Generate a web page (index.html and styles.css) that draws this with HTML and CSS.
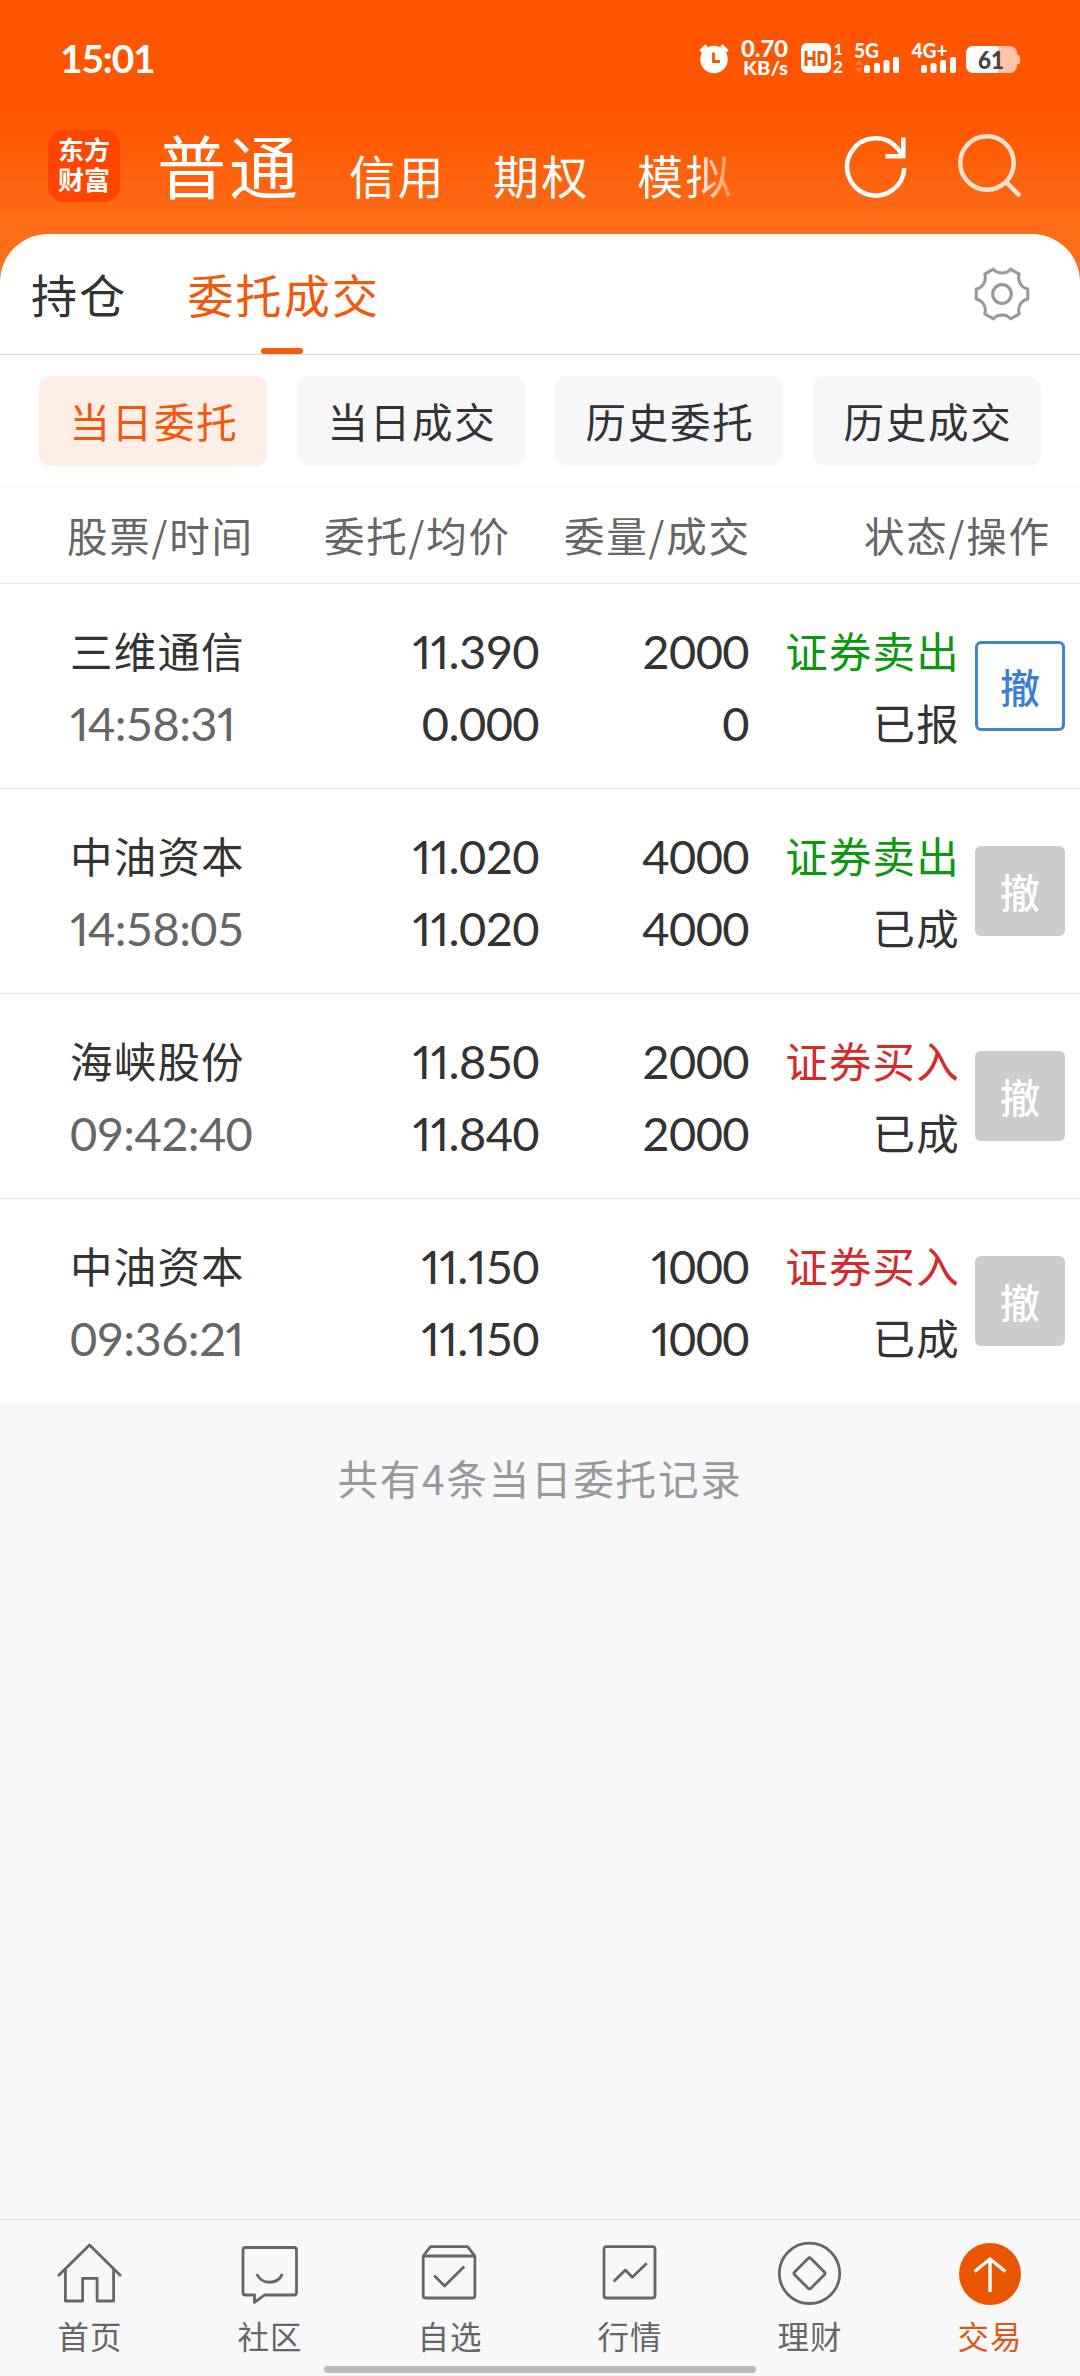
FILE: index.html
```html
<!DOCTYPE html>
<html lang="zh-CN">
<head>
<meta charset="utf-8">
<title>委托成交</title>
<link rel="stylesheet" href="styles.css">
</head>
<body>
<div class="app">
  <header class="top">
    <div class="status">
      <span class="clock">15:01</span>
      <svg class="status-icons" width="324" height="60" viewBox="698 28 324 60" fill="#fff">
        <circle cx="714" cy="59.5" r="13.7"/>
        <path d="M700.500 51.500l6-6M727.500 51.500l-6-6" stroke="#fff" stroke-width="3.500"/>
        <path d="M713.500 52.500v9h6.500" fill="none" stroke="#ff5500" stroke-width="2.800"/>
        <text x="741" y="57" font-size="22" textLength="47" lengthAdjust="spacingAndGlyphs">0.70</text>
        <text x="743" y="75" font-size="19.500" textLength="45" lengthAdjust="spacingAndGlyphs">KB/s</text>
        <rect x="801" y="43" width="30" height="30" rx="6"/>
        <path d="M806 51v15M814 51v15M806 58.500h8M819 52.500v12h4q3 0 3-3v-6q0-3-3-3z" fill="none" stroke="#e8590f" stroke-width="3"/>
        <text x="834" y="54.500" font-size="15">1</text>
        <text x="833" y="72.500" font-size="17">2</text>
        <text x="854" y="57.500" font-size="20" textLength="25" lengthAdjust="spacingAndGlyphs">5G</text>
        <path d="M855 65l4-5 4 5zM855 68l4 5 4-5z" fill="#ff7a38"/>
        <rect x="864" y="65" width="6" height="8" rx="2"/><rect x="874" y="63" width="6" height="10" rx="2"/><rect x="883.500" y="60" width="6" height="13" rx="2"/><rect x="893" y="57" width="6" height="16" rx="2"/>
        <text x="911.500" y="57.500" font-size="20" textLength="36" lengthAdjust="spacingAndGlyphs">4G+</text>
        <rect x="921" y="65" width="6" height="8" rx="2"/><rect x="930.500" y="63" width="6" height="10" rx="2"/><rect x="940" y="60" width="6" height="13" rx="2"/><rect x="950" y="57" width="6" height="16" rx="2"/>
        <path d="M998 46h12a7 7 0 0 1 7 7v1.500q3 0 3 3v4q0 3-3 3v1.500a7 7 0 0 1-7 7h-12z" fill="#ffc4a8"/>
        <path d="M973 46h25v27h-25a7 7 0 0 1-7-7v-13a7 7 0 0 1 7-7z"/>
        <text x="978" y="69" font-size="25" textLength="26" lengthAdjust="spacingAndGlyphs" fill="#444">61</text>
      </svg>
    </div>
    <div class="titlebar">
      <div class="logo"><span>东方</span><span>财富</span></div>
      <nav class="markets">
        <span class="market current">普通</span>
        <span class="market">信用</span>
        <span class="market">期权</span>
        <span class="market fading">模拟</span>
      </nav>
      <svg class="refresh" width="66" height="66" viewBox="843 134 66 66" fill="none" stroke="#fff" stroke-width="4.500">
        <path d="M904.300 168A28.600 28.600 0 1 1 898 149L903 156"/>
        <path d="M903.300 137.500V156.300H885.500"/>
      </svg>
      <svg class="search" width="66" height="66" viewBox="957 132 66 66" fill="none" stroke="#ffe2d0" stroke-width="4.500">
        <circle cx="987" cy="163" r="26.700"/>
        <path d="M1005.500 181.500L1020 196"/>
      </svg>
    </div>
  </header>

  <main class="card">
    <div class="tabs">
      <span class="tab">持仓</span>
      <span class="tab active">委托成交</span>
      <svg class="gear" width="60" height="60" viewBox="-30 -30 60 60" fill="none" stroke="#999" stroke-width="3" stroke-linejoin="round">
        <path d="M25.800-5V5A11.500 11.500 0 0 0 17.250 19.850L8.560 24.870A11.500 11.500 0 0 0-8.560 24.870L-17.250 19.850A11.500 11.500 0 0 0-25.800 5V-5A11.500 11.500 0 0 0-17.250-19.850L-8.560-24.870A11.500 11.500 0 0 0 8.560-24.870L17.250-19.850A11.500 11.500 0 0 0 25.800-5Z"/>
        <circle r="9.300" stroke-width="3.200"/>
      </svg>
    </div>
    <div class="chips">
      <span class="chip on">当日委托</span>
      <span class="chip">当日成交</span>
      <span class="chip">历史委托</span>
      <span class="chip">历史成交</span>
    </div>
    <div class="head">
      <span>股票/时间</span><span>委托/均价</span><span>委量/成交</span><span>状态/操作</span>
    </div>

    <section class="row">
      <div class="cell name"><span>三维通信</span><span class="num time"><i>1</i>4:58:3<i>1</i></span></div>
      <div class="cell price num"><span><i>11</i>.390</span><span>0.000</span></div>
      <div class="cell qty num"><span>2000</span><span>0</span></div>
      <div class="cell state"><span class="sell">证券卖出</span><span>已报</span></div>
      <button class="cancel live">撤</button>
    </section>
    <section class="row">
      <div class="cell name"><span>中油资本</span><span class="num time"><i>1</i>4:58:05</span></div>
      <div class="cell price num"><span><i>11</i>.020</span><span><i>11</i>.020</span></div>
      <div class="cell qty num"><span>4000</span><span>4000</span></div>
      <div class="cell state"><span class="sell">证券卖出</span><span>已成</span></div>
      <button class="cancel">撤</button>
    </section>
    <section class="row">
      <div class="cell name"><span>海峡股份</span><span class="num time">09:42:40</span></div>
      <div class="cell price num"><span><i>11</i>.850</span><span><i>11</i>.840</span></div>
      <div class="cell qty num"><span>2000</span><span>2000</span></div>
      <div class="cell state"><span class="buy">证券买入</span><span>已成</span></div>
      <button class="cancel">撤</button>
    </section>
    <section class="row">
      <div class="cell name"><span>中油资本</span><span class="num time">09:36:2<i>1</i></span></div>
      <div class="cell price num"><span><i>11</i>.<i>1</i>50</span><span><i>11</i>.<i>1</i>50</span></div>
      <div class="cell qty num"><span><i>1</i>000</span><span><i>1</i>000</span></div>
      <div class="cell state"><span class="buy">证券买入</span><span>已成</span></div>
      <button class="cancel">撤</button>
    </section>
  </main>

  <p class="summary">共有4条当日委托记录</p>

  <footer class="bottom">
    <nav class="nav">
      <div class="item">
        <svg class="icon" viewBox="0 0 72 72"><path d="M4 39L35.500 8 67 39M11.400 32V64H28.600V41.300H43.100V64H59.600V32"/></svg>
        <span>首页</span>
      </div>
      <div class="item">
        <svg class="icon" viewBox="0 0 72 72"><path d="M11.500 10.500H60Q62.500 10.500 62.500 13V55.500Q62.500 58 60 58H30.500L20.500 65.500V58H11.500Q9 58 9 55.500V13Q9 10.500 11.500 10.500Z"/><path d="M22.700 37C28 48 43 48 48.500 37"/></svg>
        <span>社区</span>
      </div>
      <div class="item">
        <svg class="icon" viewBox="0 0 72 72"><path d="M9.200 19L16.500 9.700H53.600L60.900 19V58.500Q60.900 61 58.400 61H11.700Q9.200 61 9.200 58.500ZM9.200 19H60.900M20.200 38.500L30.600 49 50.200 29.500"/></svg>
        <span>自选</span>
      </div>
      <div class="item">
        <svg class="icon" viewBox="0 0 72 72"><rect x="10" y="9.700" width="51" height="51.300" rx="2.500"/><path d="M19.700 44.500L31.400 33 38.300 40.300 52.700 26.300"/></svg>
        <span>行情</span>
      </div>
      <div class="item">
        <svg class="icon" viewBox="0 0 72 72"><circle cx="35.500" cy="36.300" r="30.200"/><rect x="24" y="24.800" width="23" height="23" rx="2" transform="rotate(45 35.500 36.300)"/></svg>
        <span>理财</span>
      </div>
      <div class="item selected">
        <svg class="icon" viewBox="0 0 72 72"><circle cx="36" cy="37" r="31" fill="#ea5504" stroke="none"/><path d="M20.600 34.500L36 22 51.400 34.500M36 22V55" stroke="#fff" stroke-width="3.400"/></svg>
        <span>交易</span>
      </div>
    </nav>
    <div class="handle"></div>
  </footer>
</div>
</body>
</html>
```
FILE: styles.css
```css
* { box-sizing: border-box; }

body {
  margin: 0;
  background: #f6f8fa;
  color: #333;
  font-family: "Noto Sans CJK SC", sans-serif;
}

.app {
  display: flex;
  flex-direction: column;
  width: 1080px;
  height: 2376px;
  overflow: hidden;
}

/* header */
.top {
  flex: none;
  height: 290px;
  margin-bottom: -56px;
  background: linear-gradient(#ff5500 110px, #ff6d18 232px);
  color: #fff;
}
.status {
  display: flex;
  justify-content: space-between;
  align-items: center;
  height: 116px;
  padding: 0 58px 0 60px;
}
.clock {
  font: 700 39px/40px Lato, sans-serif;
  letter-spacing: -1.2px;
}
.status-icons { font-family: Lato, sans-serif; font-weight: 900; }
.titlebar {
  display: flex;
  align-items: flex-start;
  height: 118px;
  padding: 14px 57px 0 48px;
}
.logo {
  display: flex;
  flex-direction: column;
  align-items: center;
  flex: none;
  width: 72px;
  height: 72px;
  padding-top: 4px;
  border-radius: 15px;
  background: #ff4500;
  font-size: 26px;
  font-weight: 700;
  line-height: 30px;
}
.markets {
  display: flex;
  flex: none;
  align-items: baseline;
  width: 723px;
  margin-top: -16px;
  padding-left: 37px;
}
.market {
  width: 144px;
  font-size: 46px;
  line-height: 100px;
  letter-spacing: 2.5px;
  white-space: nowrap;
}
.market.current {
  width: 192px;
  font-size: 69px;
  letter-spacing: 3px;
}
.market.fading {
  width: 100px;
  -webkit-mask-image: linear-gradient(90deg, #000 60px, transparent 108px);
  mask-image: linear-gradient(90deg, #000 60px, transparent 108px);
}
.refresh { margin-top: 4px; flex: none; }
.search { margin: 2px 0 0 48px; flex: none; }

/* card */
.card {
  flex: none;
  position: relative;
  border-radius: 48px 48px 0 0;
  background: #fff;
}
.tabs {
  display: flex;
  height: 121px;
  padding: 0 48px 0 31px;
  border-bottom: 1px solid #ddd;
}
.tab {
  position: relative;
  margin-right: 60px;
  font-size: 46px;
  line-height: 118px;
  letter-spacing: 2.2px;
}
.tab.active { color: #f2570a; }
.tab.active::after {
  content: "";
  position: absolute;
  left: 74px;
  bottom: 0;
  width: 42px;
  height: 6px;
  border-radius: 3px;
  background: #f95a0c;
}
.gear { margin: 30px 0 0 auto; }
.chips {
  display: flex;
  gap: 30px;
  height: 132px;
  padding: 21px 39px 0;
  border-bottom: 1px solid #f4f4f4;
}
.chip {
  width: 228px;
  height: 90px;
  padding-left: 2px;
  border-radius: 12px;
  background: #f7f7fa;
  font-size: 40.5px;
  line-height: 90px;
  letter-spacing: 1.8px;
  text-align: center;
  white-space: nowrap;
}
.chip.on { background: #ffeee6; color: #f2570a; }

.head {
  display: flex;
  height: 97px;
  padding-left: 67px;
  border-bottom: 1px solid #e8e8e8;
  color: #666;
  font-size: 40.5px;
  line-height: 95px;
  letter-spacing: 1.8px;
  white-space: nowrap;
}
.head span:nth-child(1) { width: 257px; }
.head span:nth-child(2) { width: 240px; }
.head span:nth-child(3) { width: 300px; }

/* order rows */
.row {
  display: flex;
  height: 205px;
  padding: 30px 15px 0 70px;
  border-bottom: 1px solid #e8e8e8;
}
.row:last-child { border-bottom: 0; }
.cell {
  display: flex;
  flex-direction: column;
  font-size: 42.5px;
  line-height: 72px;
  letter-spacing: 1.2px;
  white-space: nowrap;
}
.name { width: 230px; }
.price { width: 239px; text-align: right; }
.qty { width: 210px; text-align: right; }
.state { width: 211px; text-align: right; }
.num {
  padding-top: 1px;
  font-family: Lato, sans-serif;
  font-size: 47px;
  letter-spacing: -.6px;
}
/* the digit 1 is set narrow, the other digits on a fixed width */
.num i {
  font-style: normal;
  font-feature-settings: "pnum";
}
.time { color: #666; }
.sell { color: #0c980c; }
.buy { color: #d62a2a; }
.cancel {
  width: 90px;
  height: 90px;
  margin: 27px 0 0 15px;
  padding: 0;
  border: 0;
  border-radius: 6px;
  background: #ccc;
  color: #fff;
  font: 500 40px/86px "Noto Sans CJK SC", sans-serif;
}
.cancel.live {
  border: 3px solid #4384cc;
  background: #fff;
  color: #3a7fd5;
  line-height: 80px;
}

.summary {
  flex: 1;
  margin: 0;
  padding-top: 44px;
  color: #999;
  font-size: 40.5px;
  line-height: 60px;
  letter-spacing: 1.8px;
  text-align: center;
}

/* bottom navigation */
.bottom {
  flex: none;
  height: 157px;
  border-top: 1px solid #dfe2e5;
  background: #f8f8fa;
}
.nav { display: flex; height: 146px; }
.item {
  display: flex;
  flex-direction: column;
  align-items: center;
  width: 180px;
  padding-top: 17px;
  color: #666;
  font-size: 31.5px;
  line-height: 60px;
  letter-spacing: 1px;
}
.item.selected { color: #dc5a17; }
.icon {
  width: 72px;
  height: 72px;
  fill: none;
  stroke: #666;
  stroke-width: 2.8;
  stroke-linejoin: round;
}
.item span { margin-top: -4px; }
.handle {
  width: 432px;
  height: 7px;
  margin: 0 auto;
  border-radius: 4px;
  background: #bbb;
}
```
